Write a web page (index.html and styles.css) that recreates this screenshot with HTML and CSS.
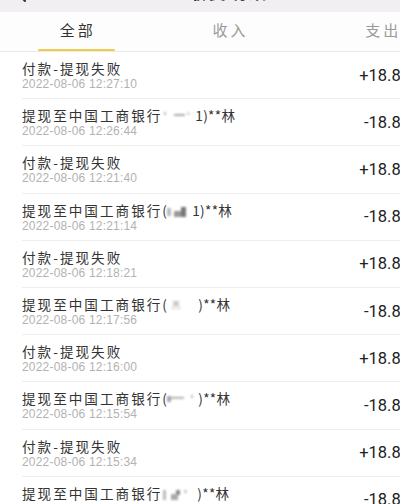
FILE: index.html
```html
<!DOCTYPE html>
<html lang="zh-CN">
<head>
<meta charset="utf-8">
<title>收支明细</title>
<link rel="stylesheet" href="styles.css">
</head>
<body>
<div class="page">
  <header class="topbar">
    <div class="back">
      <svg width="14" height="20" viewBox="0 0 14 20"><path d="M11 2 L3 10 L11 18" fill="none" stroke="#333" stroke-width="2" stroke-linecap="round" stroke-linejoin="round"/></svg>
    </div>
    <div class="title">收支明细</div>
    <div></div>
  </header>
  <nav class="tabs">
    <div class="tab active"><span class="tab-label">全部</span></div>
    <div class="tab"><span class="tab-label">收入</span></div>
    <div class="tab"><span class="tab-label">支出</span></div>
  </nav>
  <ul class="list">
    <li class="row"><div class="info"><div class="name">付款-提现失败</div><div class="date">2022-08-06 12:27:10</div></div><div class="amount">+18.80</div></li>
    <li class="row"><div class="info"><div class="name">提现至中国工商银行<span class="mask m1"></span><span class="tail">1)**林</span></div><div class="date">2022-08-06 12:26:44</div></div><div class="amount">-18.80</div></li>
    <li class="row"><div class="info"><div class="name">付款-提现失败</div><div class="date">2022-08-06 12:21:40</div></div><div class="amount">+18.80</div></li>
    <li class="row"><div class="info"><div class="name">提现至中国工商银行<span class="tail">(</span><span class="mask m2"></span><span class="tail">1)**林</span></div><div class="date">2022-08-06 12:21:14</div></div><div class="amount">-18.80</div></li>
    <li class="row"><div class="info"><div class="name">付款-提现失败</div><div class="date">2022-08-06 12:18:21</div></div><div class="amount">+18.80</div></li>
    <li class="row"><div class="info"><div class="name">提现至中国工商银行<span class="tail">(</span><span class="mask m3"></span><span class="tail">)**林</span></div><div class="date">2022-08-06 12:17:56</div></div><div class="amount">-18.80</div></li>
    <li class="row"><div class="info"><div class="name">付款-提现失败</div><div class="date">2022-08-06 12:16:00</div></div><div class="amount">+18.80</div></li>
    <li class="row"><div class="info"><div class="name">提现至中国工商银行<span class="tail">(</span><span class="mask m4"></span><span class="tail">)**林</span></div><div class="date">2022-08-06 12:15:54</div></div><div class="amount">-18.80</div></li>
    <li class="row"><div class="info"><div class="name">付款-提现失败</div><div class="date">2022-08-06 12:15:34</div></div><div class="amount">+18.80</div></li>
    <li class="row"><div class="info"><div class="name">提现至中国工商银行<span class="mask m5"></span><span class="tail">)**林</span></div><div class="date">2022-08-06 12:15:12</div></div><div class="amount">-18.80</div></li>
  </ul>
</div>
</body>
</html>
```

FILE: styles.css
```css
html, body {
  margin: 0;
  padding: 0;
  overflow: hidden;
  background: #ffffff;
}

.page {
  width: 458px;
  font-family: "Noto Sans CJK SC", "Noto Sans", sans-serif;
  color: #333;
}

.topbar {
  height: 12px;
  background: #f2eff2;
  display: grid;
  grid-template-columns: 1fr auto 1fr;
  overflow: hidden;
}

.back {
  padding-left: 14px;
}

.back svg {
  display: block;
  margin-top: -17px;
}

.title {
  font-size: 17px;
  line-height: 20px;
  margin-top: -18px;
  font-weight: 700;
  color: #222;
  letter-spacing: 3px;
}

.tabs {
  display: grid;
  grid-template-columns: repeat(3, 1fr);
  height: 39px;
  background: #fdfdfd;
  border-bottom: 1px solid #e9e9e9;
}

.tab {
  display: flex;
  flex-direction: column;
  align-items: center;
  justify-content: space-between;
  color: #9a9a9a;
}

.tab-label {
  padding-top: 8px;
  padding-left: 3px;
  font-size: 15px;
  line-height: 20px;
  letter-spacing: 3px;
}

.tab.active {
  color: #333;
}

.tab.active::after {
  content: "";
  display: block;
  width: 77px;
  height: 2px;
  background: #f1cb4a;
  border-radius: 1px;
}

.list {
  list-style: none;
  margin: 0;
  padding: 0;
}

.row {
  display: flex;
  align-items: center;
  box-sizing: border-box;
  height: 47.2px;
  margin-left: 22px;
  padding-right: 48px;
  border-bottom: 1px solid #eeeeee;
}

.info {
  display: flex;
  flex-direction: column;
}

.name {
  font-size: 13.6px;
  line-height: 18px;
  letter-spacing: 2px;
  color: #333;
  white-space: nowrap;
}

.tail {
  letter-spacing: 0.3px;
}

.date {
  font-family: "Liberation Sans", Arial, sans-serif;
  font-size: 12px;
  line-height: 14px;
  letter-spacing: 0.2px;
  color: #b2b2b2;
}

.amount {
  margin-left: auto;
  font-family: Roboto, "Liberation Sans", sans-serif;
  font-weight: 400;
  font-size: 16.5px;
  color: #222;
}

.mask {
  display: inline-block;
  height: 10px;
  vertical-align: -1px;
  margin-right: 1px;
  filter: blur(0.8px);
}

.m1 {
  width: 32px;
  background:
    linear-gradient(#bbb, #bbb) 2px 0 / 2px 3px no-repeat,
    linear-gradient(#aaa, #aaa) 12px 2px / 11px 2px no-repeat,
    linear-gradient(#ddd, #ddd) 25px 0 / 3px 3px no-repeat;
}

.m2 {
  width: 24px;
  background:
    linear-gradient(#bbb, #bbb) 0 1px / 4px 8px no-repeat,
    linear-gradient(#999, #999) 7px 4px / 7px 6px no-repeat,
    linear-gradient(#777, #777) 14px 0 / 5px 10px no-repeat;
}

.m3 {
  width: 30px;
  background:
    linear-gradient(#ccc, #ccc) 6px 0 / 6px 5px no-repeat,
    linear-gradient(#eee, #eee) 4px 5px / 10px 4px no-repeat;
}

.m4 {
  width: 30px;
  background:
    linear-gradient(#aaa, #aaa) 0 1px / 4px 6px no-repeat,
    linear-gradient(#999, #999) 4px 2px / 13px 1.5px no-repeat,
    linear-gradient(#bbb, #bbb) 24px 0 / 2px 3px no-repeat;
}

.m5 {
  width: 34px;
  background:
    linear-gradient(#bbb, #bbb) 1px 0 / 3px 10px no-repeat,
    linear-gradient(#aaa, #aaa) 9px 4px / 7px 6px no-repeat,
    linear-gradient(#888, #888) 14px 0 / 4px 5px no-repeat,
    linear-gradient(#ccc, #ccc) 22px 0 / 3px 3px no-repeat;
}
```
